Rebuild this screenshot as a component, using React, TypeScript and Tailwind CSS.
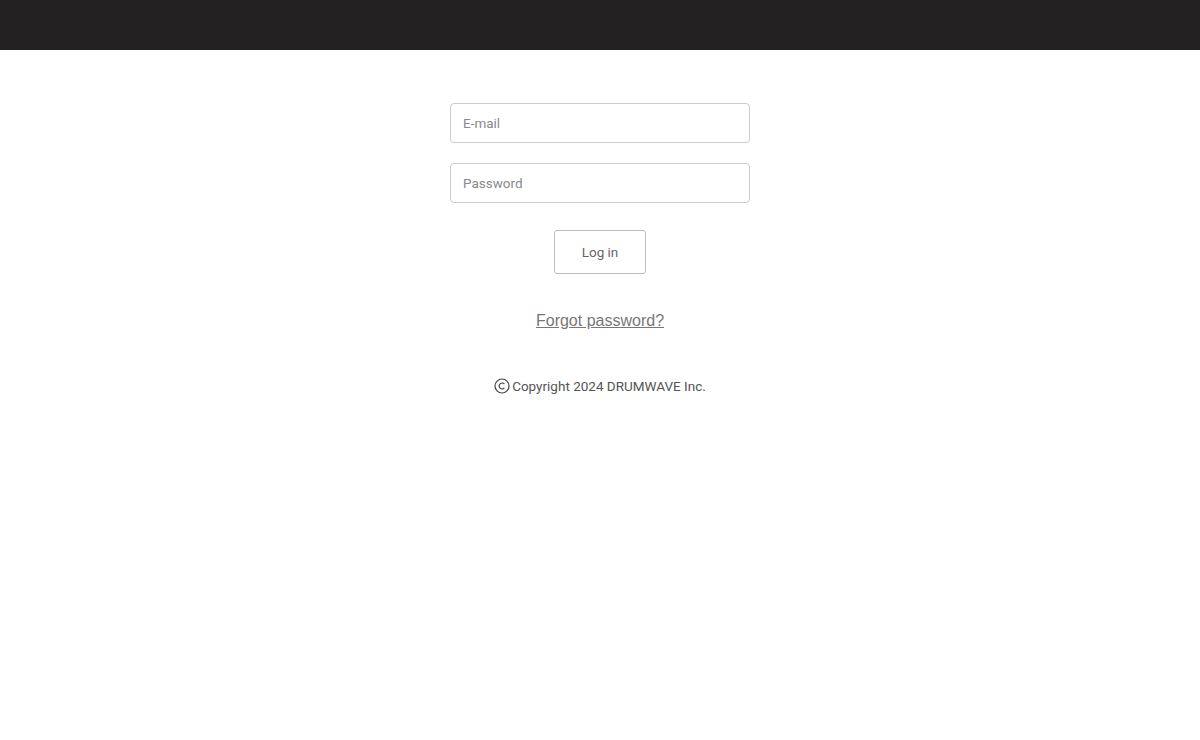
export default function App() {
  const font = { fontFamily: '"Roboto", "Liberation Sans", sans-serif' };
  return (
    <div className="min-h-screen bg-white" style={font}>
      <header className="h-[50px] bg-[#232122]" />
      <main className="flex flex-col items-center pt-[53px]">
        <form className="flex w-[300px] flex-col gap-5" onSubmit={(e) => e.preventDefault()}>
          <input
            type="email"
            placeholder="E-mail"
            className="h-10 w-full rounded-[4px] border border-[#cccccc] px-3 text-[13.5px] text-[#555] placeholder:text-[#8a8a8a] outline-none"
          />
          <input
            type="password"
            placeholder="Password"
            className="h-10 w-full rounded-[4px] border border-[#cccccc] px-3 text-[13.5px] text-[#555] placeholder:text-[#8a8a8a] outline-none"
          />
          <div className="mt-[7px] flex justify-center">
            <button
              type="submit"
              className="h-[44px] w-[92px] rounded-[3px] border border-[#bdbdbd] bg-white text-[13.5px] text-[#666]"
            >
              Log in
            </button>
          </div>
        </form>
        <a
          href="#"
          className="mt-[35px] text-[16px] text-[#777] underline"
          style={{ fontFamily: '"Liberation Sans", Arial, sans-serif' }}
        >
          Forgot password?
        </a>
        <p className="mt-[43px] flex items-center gap-[2px] text-[13.5px] text-[#555]">
          <svg width="16" height="16" viewBox="0 0 16 16" fill="none" stroke="#444" strokeWidth="1.2">
            <circle cx="8" cy="8" r="7" />
            <path d="M10.4 6A3 3 0 1 0 10.4 10" />
          </svg>
          <span>Copyright 2024 DRUMWAVE Inc.</span>
        </p>
      </main>
    </div>
  );
}
